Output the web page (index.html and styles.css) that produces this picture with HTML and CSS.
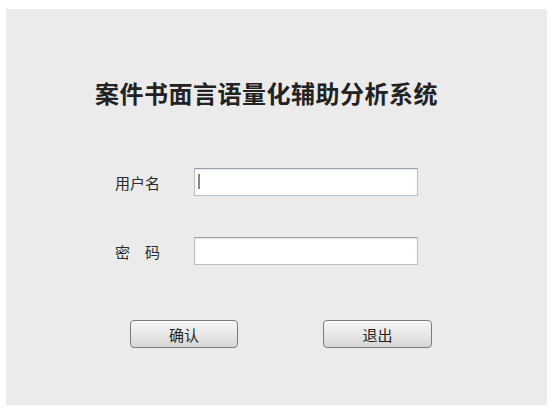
FILE: index.html
```html
<!DOCTYPE html>
<html lang="zh-CN">
<head>
  <meta charset="UTF-8">
  <title>案件书面言语量化辅助分析系统</title>
  <link rel="stylesheet" href="styles.css">
</head>
<body>

<div class="panel">
  <h1 class="title">案件书面言语量化辅助分析系统</h1>

  <div class="form">
    <div class="row">
      <label class="label" for="user">用户名</label>
      <span class="field">
        <input class="input" id="user" type="text">
        <span class="caret"></span>
      </span>
    </div>
    <div class="row">
      <label class="label spaced" for="pass">密码</label>
      <span class="field">
        <input class="input" id="pass" type="password">
      </span>
    </div>
  </div>

  <div class="buttons">
    <button class="btn">确认</button>
    <button class="btn">退出</button>
  </div>
</div>

</body>
</html>
```

FILE: styles.css
```css
body { margin: 0; background: #fff; font-family: "Noto Sans CJK SC", "Noto Sans", sans-serif; color: #222; }
.panel { margin: 9px 8px 5px 6px; width: 541px; height: 396px; background: #ebebeb; padding-top: 72px; box-sizing: border-box; }
.title { margin: 0; padding-left: 89px; font-size: 24px; line-height: 24px; font-weight: bold; color: #222; letter-spacing: 0.5px; }
.form { margin-top: 63px; display: flex; flex-direction: column; gap: 41px; padding-left: 109px; }
.row { display: flex; align-items: center; height: 28px; }
.label { width: 79px; font-size: 15px; color: #2a2a2a; }
.label.spaced { letter-spacing: 15px; }
.field { position: relative; display: block; }
.input { display: block; width: 224px; height: 28px; box-sizing: border-box; margin: 0; padding: 0 4px; border: 1px solid #b8c0c8; border-top-color: #98a1aa; background: #fff; box-shadow: inset 0 1px 2px rgba(0,0,0,0.1); outline: none; }
.caret { position: absolute; left: 4px; top: 6px; width: 2px; height: 15px; background: #888; }
.buttons { margin-top: 55px; padding-left: 124px; display: flex; gap: 85px; }
.btn { width: 108px; height: 28px; font-family: inherit; font-size: 15px; color: #1e1e1e; border: 1px solid #7c7c7c; border-radius: 4px; background: linear-gradient(#f6f6f6, #e8e8e8 50%, #d6d6d6); box-shadow: inset 0 1px 0 #fff; padding: 0; }
.btn + .btn { width: 109px; }
```
